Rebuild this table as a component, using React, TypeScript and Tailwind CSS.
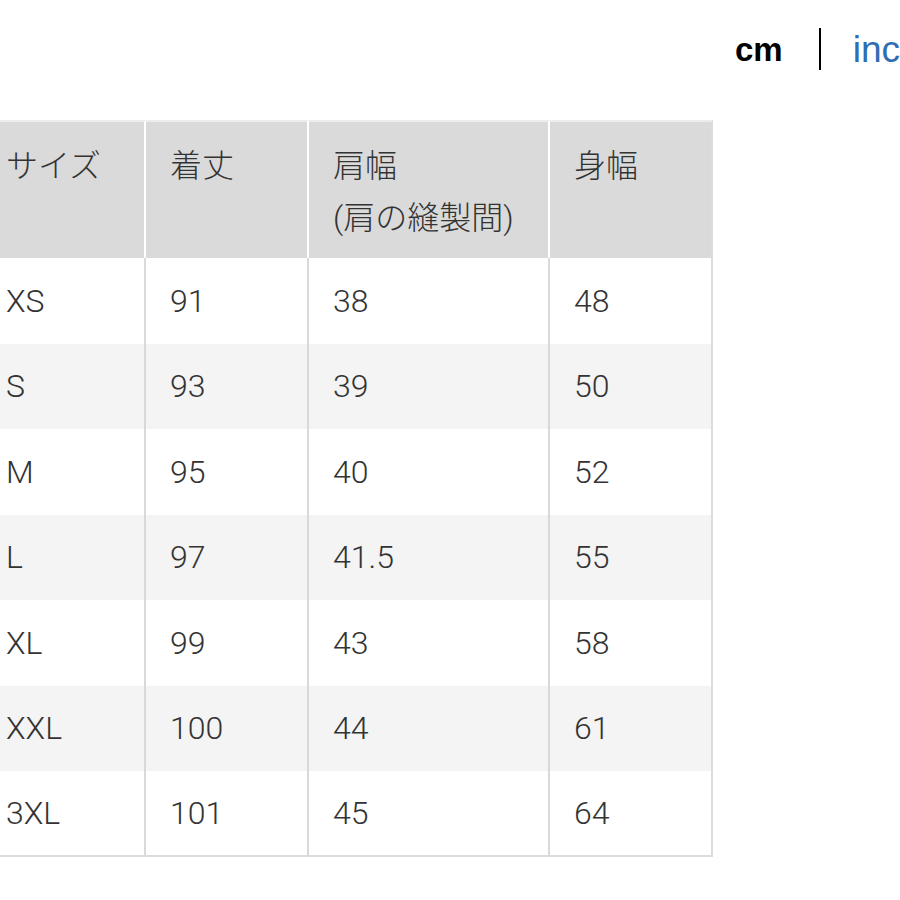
import React from "react"

const rows = [
  { size: "XS", length: "91", shoulder: "38", body: "48" },
  { size: "S", length: "93", shoulder: "39", body: "50" },
  { size: "M", length: "95", shoulder: "40", body: "52" },
  { size: "L", length: "97", shoulder: "41.5", body: "55" },
  { size: "XL", length: "99", shoulder: "43", body: "58" },
  { size: "XXL", length: "100", shoulder: "44", body: "61" },
  { size: "3XL", length: "101", shoulder: "45", body: "64" },
]

const font = { fontFamily: '"Roboto", "Noto Sans CJK JP", sans-serif' }

export default function App() {
  return (
    <div className="w-[900px] h-[900px] overflow-hidden bg-white text-[#333]" style={font}>
      {/* Unit toggle */}
      <div className="h-[120px] flex items-start pt-[28px] pl-[735px] whitespace-nowrap">
        <div className="flex items-center h-[42px]" style={{ fontFamily: '"Liberation Sans", Arial, sans-serif' }}>
          <span className="text-[33px] font-bold text-black leading-none">cm</span>
          <span className="ml-[36px] mr-[32px] w-[2px] h-[42px] bg-black" />
          <span className="text-[37px] text-[#2f6db5] leading-none">inches</span>
        </div>
      </div>

      {/* Size table */}
      <table className="table-fixed border-separate border-spacing-0 ml-[-18px] w-[731px] text-[32px] font-light">
        <colgroup>
          <col className="w-[164px]" />
          <col className="w-[163px]" />
          <col className="w-[241px]" />
          <col className="w-[163px]" />
        </colgroup>
        <thead>
          <tr className="bg-[#dadada] align-top">
            <th className="text-left font-light pl-6 pt-[18px] pb-[14px] leading-[52px] border-t-2 border-t-[#ececec] border-r-2 border-r-white">サイズ</th>
            <th className="text-left font-light pl-6 pt-[18px] pb-[14px] leading-[52px] border-t-2 border-t-[#ececec] border-r-2 border-r-white">着丈</th>
            <th className="text-left font-light pl-6 pt-[18px] pb-[14px] leading-[52px] border-t-2 border-t-[#ececec] border-r-2 border-r-white">
              肩幅
              <br />
              (肩の縫製間)
            </th>
            <th className="text-left font-light pl-6 pt-[18px] pb-[14px] leading-[52px] border-t-2 border-t-[#ececec] border-r-2 border-r-[#dcdcdc]">身幅</th>
          </tr>
        </thead>
        <tbody>
          {rows.map((r, i) => {
            const last = i === rows.length - 1 ? "border-b-2 border-b-[#dcdcdc]" : ""
            return (
              <tr key={r.size} className={i % 2 === 1 ? "bg-[#f4f4f4]" : "bg-white"}>
                <td className={`h-[85.5px] pl-6 border-r-2 border-r-[#d9d9d9] ${last}`}>{r.size}</td>
                <td className={`h-[85.5px] pl-6 border-r-2 border-r-[#d9d9d9] ${last}`}>{r.length}</td>
                <td className={`h-[85.5px] pl-6 border-r-2 border-r-[#d9d9d9] ${last}`}>{r.shoulder}</td>
                <td className={`h-[85.5px] pl-6 border-r-2 border-r-[#dcdcdc] ${last}`}>{r.body}</td>
              </tr>
            )
          })}
        </tbody>
      </table>
    </div>
  )
}
